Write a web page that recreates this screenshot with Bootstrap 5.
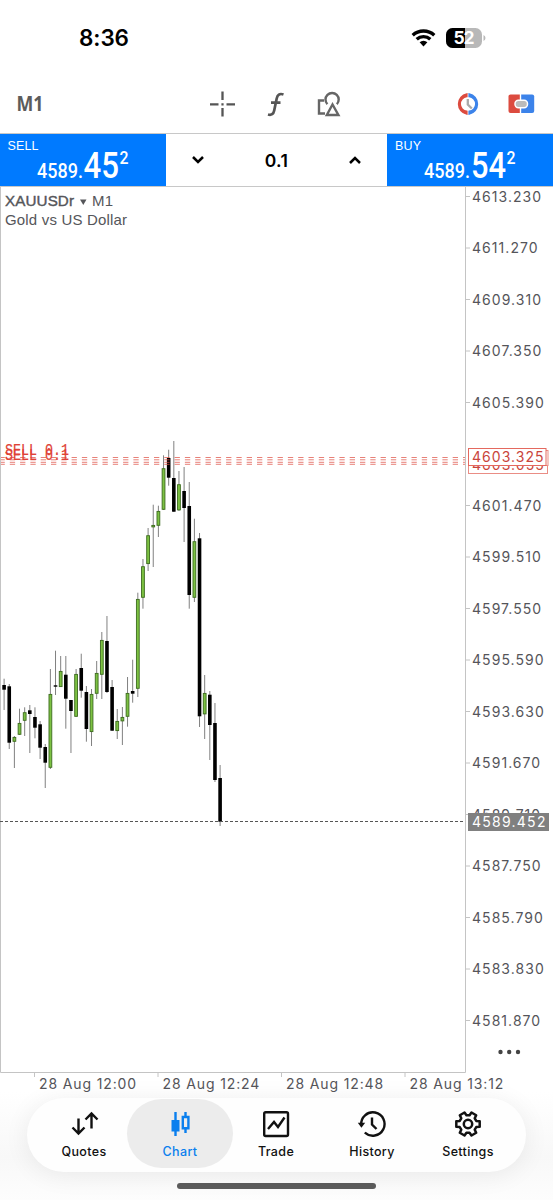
<!DOCTYPE html>
<html lang="en">
<head>
<meta charset="utf-8">
<meta name="viewport" content="width=device-width, initial-scale=1">
<title>XAUUSDr M1</title>
<link href="https://cdn.jsdelivr.net/npm/bootstrap@5.3.0/dist/css/bootstrap.min.css" rel="stylesheet">
<style>
  body { font-family: Inter, "Liberation Sans", sans-serif; background: #fff; color: #000; }
  svg { display: block; flex: none; overflow: visible; }
  .screen { width: 553px; height: 1200px; overflow: hidden; }
  .statusbar { height: 75px; padding: 0 67px 0 79px; }
  .clock { font-size: 22.5px; font-weight: 600; letter-spacing: -.1px; }
  .toolbar { height: 58px; padding: 0 18px 0 16px; }
  .tradebar { height: 54px; border-top: 1px solid #c8c8c8; border-bottom: 1px solid #c8c8c8; }
  .quote { width: 166px; background: #007aff; }
  .lot { font-size: 17.5px; font-weight: 600; letter-spacing: .4px; padding-top: 2px; }
  .chart-area { height: 905px; }
  .bottom { height: 108px; background: linear-gradient(#fff, #f8f8f8 60%, #fdfdfd); }
  .tabs { width: 499px; height: 74px; margin: 6px 0 0 27px; padding: 1px 9px; border-radius: 37px; background: #fefefe; box-shadow: 0 3px 26px rgba(0,0,0,.07); }
  .tab { width: 96px; height: 69px; font-size: 12.5px; font-weight: 500; letter-spacing: .35px; line-height: 16px; color: #111; }
  .tab svg { margin: 11px 0 6px; }
  .tab-on { width: 106px; margin: 0 -5px; border-radius: 35px; background: #ececec; color: #0a7fee; }
  .homebar { width: 199px; height: 6px; margin: 11px 0 0 177px; border-radius: 3px; background: #5c5c5c; }
  .axis { font: 14px Inter, sans-serif; fill: #55555a; }
</style>
</head>
<body>
<div class="screen d-flex flex-column">
  <header class="statusbar d-flex align-items-center justify-content-between">
    <div class="clock">8:36</div>
    <div class="d-flex align-items-center">
      <svg width="26" height="20" viewBox="0 0 26 20" fill="none" stroke="#000" stroke-width="3.4">
        <path d="M1.7 7.2a16 16 0 0 1 21.6 0M5.7 11.3a10 10 0 0 1 13.6 0"/>
        <path d="M8.6 14.3a5.8 5.8 0 0 1 7.8 0L12.5 18.4z" fill="#000" stroke="none"/>
      </svg>
      <svg class="ms-2" width="41" height="20" viewBox="0 0 41 20">
        <rect x="1" y="0" width="36" height="20" rx="6.5" fill="#b8b8b8"/>
        <path d="M20 0H7.500A6.500 6.500 0 0 0 1 6.500v7A6.500 6.500 0 0 0 7.500 20H20z"/>
        <path d="M38.500 7v6q2-1 2-3t-2-3" fill="#b8b8b8"/>
        <text x="8.500" y="16.300" font-family="Inter" font-size="17.500" font-weight="700" fill="#fff" textLength="21">52</text>
      </svg>
    </div>
  </header>

  <div class="toolbar d-flex align-items-center">
    <svg width="30" height="30" viewBox="0 0 30 30"><text x="0.500" y="22" font-family="Open Sans" font-size="20.500" font-weight="700" fill="#5c5c5c" textLength="27" lengthAdjust="spacingAndGlyphs">M1</text></svg>
    <svg width="28" height="28" viewBox="0 0 28 28" stroke="#555" stroke-width="2.300" style="margin-left:162px"><path d="M14.500 1.500v8.500M14.500 18v8.500M2 14.300h8.500M18.500 14.300H27M13.400 14.300h2.200"/></svg>
    <svg width="20" height="28" viewBox="0 0 20 28" fill="none" stroke="#555" stroke-width="2.700" style="margin-left:30px"><path d="M17.500 4.500c-4-1.400-6 .3-6.800 4L8.200 20.500c-.7 3.600-2.700 5-6.200 4M5 12.700h9.500"/></svg>
    <svg width="26" height="28" viewBox="0 0 26 28" fill="none" stroke="#666" stroke-width="2.400" style="margin-left:30px"><path d="M8 10.500H3V23.500H9M11.400 14.200a6.600 6.600 0 1 1 9.400 0M16.500 14.500L10.800 25h11.600z"/></svg>
    <svg class="ms-auto" width="28" height="28" viewBox="0 0 28 28">
      <path d="M12.800 4a10.200 10.200 0 0 0 0 20v-2.600a7.500 7.500 0 0 1 0-14.900z" fill="#dc4b3f" stroke="#dc4b3f" stroke-width="1.600"/>
      <path d="M15.200 4a10.200 10.200 0 0 1 0 20v-2.600a7.500 7.500 0 0 0 0-14.900z" fill="#3c83ea" stroke="#3c83ea" stroke-width="1.600"/>
      <path d="M13.800 9v5.500l4 4" fill="none" stroke="#aaa" stroke-width="2.300"/>
    </svg>
    <svg width="28" height="28" viewBox="0 0 28 28" style="margin-left:25px">
      <path d="M12.800 4.500H3.500a2 2 0 0 0-2 2v14.500a2 2 0 0 0 2 2h9.300z" fill="#dc4b3f"/>
      <path d="M14.200 4.500h11a2 2 0 0 1 2 2v14.500a2 2 0 0 1-2 2h-11z" fill="#3c83ea"/>
      <rect x="8" y="10.300" width="12.500" height="7.400" rx="3.400" fill="#bbb" stroke="#fff" stroke-width="1.500"/>
    </svg>
  </div>

  <section class="tradebar d-flex">
    <div class="quote">
      <svg width="166" height="52" viewBox="0 134 166 52" fill="#fff" font-family="Roboto">
        <text x="7.500" y="150" font-family="Liberation Sans" font-size="12.500" textLength="31">SELL</text>
        <text x="37" y="177.500" font-size="21" font-weight="500" textLength="46" lengthAdjust="spacingAndGlyphs">4589.</text>
        <text x="83.500" y="177.500" font-size="36" font-weight="500" textLength="35.500" lengthAdjust="spacingAndGlyphs">45</text>
        <text x="119.500" y="164" font-size="19" font-weight="500" textLength="9" lengthAdjust="spacingAndGlyphs">2</text>
      </svg>
    </div>
    <div class="flex-fill d-flex align-items-center justify-content-between">
      <svg width="14" height="10" viewBox="0 0 14 10" fill="none" stroke="#000" stroke-width="2.500" style="margin-left:25px"><path d="M2 2l5 5 5-5"/></svg>
      <span class="lot">0.1</span>
      <svg width="14" height="10" viewBox="0 0 14 10" fill="none" stroke="#000" stroke-width="2.500" style="margin-right:25px"><path d="M2 8l5-5 5 5"/></svg>
    </div>
    <div class="quote">
      <svg width="166" height="52" viewBox="387 134 166 52" fill="#fff" font-family="Roboto">
        <text x="395" y="150" font-family="Liberation Sans" font-size="12.500" textLength="26">BUY</text>
        <text x="424" y="177.500" font-size="21" font-weight="500" textLength="46" lengthAdjust="spacingAndGlyphs">4589.</text>
        <text x="471" y="177.500" font-size="36" font-weight="500" textLength="35" lengthAdjust="spacingAndGlyphs">54</text>
        <text x="506.500" y="164" font-size="19" font-weight="500" textLength="9" lengthAdjust="spacingAndGlyphs">2</text>
      </svg>
    </div>
  </section>

  <main class="chart-area">
    <svg id="chart" width="553" height="908" viewBox="0 187 553 908">
      <path d="M.5 187V1072.500H465.500V187" fill="none" stroke="#c4c4c4"/>
      <g font-family="Liberation Sans" font-size="15" fill="#55565a">
        <text x="5" y="206" font-size="15.200" stroke="#55565a" stroke-width=".4" textLength="69">XAUUSDr</text>
        <path d="M80 199.500h6.500l-3.200 5.500z"/>
        <text x="92" y="206" textLength="21">M1</text>
        <text x="5" y="225" textLength="122">Gold vs US Dollar</text>
      </g>
      <g id="scale" class="axis"></g>
      <g id="candles" shape-rendering="auto"></g>
      <g stroke="#e0574c" stroke-width="1" stroke-dasharray="5.300 5" opacity=".75">
        <path d="M1 457.500H465M1 459.800H465M1 462.300H465M1 464.300H465" stroke-dashoffset="1.500"/>
      </g>
      <g font-family="Liberation Mono" font-size="17" fill="#df4236" stroke="#df4236" stroke-width=".2">
        <text x="5" y="455" textLength="64" lengthAdjust="spacingAndGlyphs">SELL 0.1</text>
        <text x="5" y="460" textLength="64" lengthAdjust="spacingAndGlyphs">SELL 0.1</text>
      </g>
      <path d="M0 821.500H465" stroke="#555" stroke-dasharray="3 2"/>
      <g class="axis">
        <rect x="468.500" y="454.500" width="79" height="19" fill="#fff" stroke="#ea8d85"/>
        <text x="472" y="469.500" letter-spacing="1.050" fill="#c9453b">4603.055</text>
        <rect x="468.500" y="450.500" width="79.500" height="15" fill="#fff" stroke="#ea8d85"/>
        <rect x="468.500" y="448.500" width="77.500" height="17" fill="#fff" stroke="#e4695f"/>
        <text x="472" y="462" letter-spacing="1.050" fill="#c9453b">4603.325</text>
        <rect x="468" y="813" width="81" height="18" fill="#808080"/>
        <text x="472" y="827" letter-spacing="1.250" fill="#fff">4589.452</text>
      </g>
      <g fill="#444"><circle cx="500.500" cy="1052" r="2.200"/><circle cx="509.200" cy="1052" r="2.200"/><circle cx="518" cy="1052" r="2.200"/></g>
    </svg>
  </main>

  <footer class="bottom">
    <nav class="tabs d-flex position-relative">
      <div class="tab d-flex flex-column align-items-center">
        <svg width="28" height="28" viewBox="0 0 28 28" fill="none" stroke="#111" stroke-width="2.400"><path d="M8.500 8.500v15M2.500 17.500l6 6 6-6M21.500 18.500V3.500M15.500 9.500l6-6 6 6"/></svg>
        Quotes
      </div>
      <div class="tab tab-on d-flex flex-column align-items-center">
        <svg width="28" height="28" viewBox="0 0 28 28" fill="none" stroke="#0a7fee" stroke-width="2.400"><path d="M9.500 2v24M19.500 2v4.500M19.500 18v5"/><path d="M5.500 10h8v11.500h-8z" fill="#0a7fee" stroke="none"/><path d="M16.800 7h5.600v11.300h-5.600z"/></svg>
        Chart
      </div>
      <div class="tab d-flex flex-column align-items-center">
        <svg width="28" height="28" viewBox="0 0 28 28" fill="none" stroke="#111" stroke-width="2.400"><rect x="2.200" y="2.200" width="23.800" height="23.800" rx="1.500"/><path d="M6 19l6-7 4 5 6.500-9.500"/></svg>
        Trade
      </div>
      <div class="tab d-flex flex-column align-items-center">
        <svg width="28" height="28" viewBox="0 0 28 28" fill="none" stroke="#111" stroke-width="2.400"><path d="M3.200 15a11.700 11.700 0 1 1 3.600 7.500M14 7.500V14.500l4.500 4.500" /><path d="M-.2 12.800h7.400L3.400 17.800z" fill="#111" stroke="none"/></svg>
        History
      </div>
      <div class="tab d-flex flex-column align-items-center">
        <svg width="28" height="28" viewBox="0 0 28 28" fill="none" stroke="#111" stroke-width="2.500" stroke-linejoin="round"><path id="gear"/><circle cx="14" cy="14" r="4.200"/></svg>
        Settings
      </div>
    </nav>
    <div class="homebar"></div>
  </footer>
</div>
<script src="https://cdn.jsdelivr.net/npm/bootstrap@5.3.0/dist/js/bootstrap.bundle.min.js"></script>
<script>
  // Each bar: direction (1 up, 0 down), body top, body bottom, high, low
  const bars = [
    [0,685,689.7,678.7,710],[0,686.3,742.7,684,749],[1,737,741.7,736,768],[1,723,734.7,708.7,735],
    [1,712.3,720.7,707.3,736],[0,710.3,714,705,753],[0,717,727.7,707.3,738.3],[0,724.3,747.7,721,759],
    [0,747,762.7,744,788],[1,694,767.7,669,769],[0,685.3,686.7,650.7,695],[1,671,687,656,687],
    [0,674.7,698.7,656,728.7],[0,700,711,700,753],[1,674,716.7,669,717],[0,668,690.7,653.7,697.7],
    [0,692,729,686,741.7],[1,694,732,689,746],[1,673,693.7,661,699],[1,640,674.7,632,699],
    [0,641,692,616,693],[0,687,730.7,680,731],[1,721,731,709,739],[1,717,721.3,707,745],
    [1,693,716.7,677,726.7],[0,691,693.7,659.7,702.7],[1,599,688.7,592.7,697],[1,566.3,597.7,559,608.7],
    [1,535.3,564,528,571],[1,525,527.3,504.7,567],[1,511,525.7,505.7,537],[1,468.3,509.7,455.3,510],
    [0,458,477.7,449.7,485.7],[0,478,511.7,441,512],[1,484.3,510.3,471,511],[0,491,508,467,542],
    [0,506,595,482,608.7],[1,541.3,597.7,518.7,602],[0,538.3,716.3,533,727],[1,693,714.3,675,739],
    [0,694.7,725,691,760],[0,723,780,703,782],[0,778,821.7,765,826]
  ];
  document.getElementById('candles').innerHTML = bars.map(([up, t, b, h, l], i) => {
    const x = 4.1 + i * 5.143;
    const wick = `<path d="M${x} ${h}V${l}" stroke="#808080" stroke-width="1"/>`;
    return wick + (up
      ? `<rect x="${x - 1.4}" y="${t + .4}" width="2.800" height="${Math.max(b - t - .8, 1)}" fill="#7cc142" stroke="#3c6b1e" stroke-width=".9"/>`
      : `<rect x="${x - 1.8}" y="${t}" width="3.600" height="${b - t}" fill="#000"/>`);
  }).join('');

  let scale = '';
  for (let i = 0; i < 17; i++) {
    if (i === 5) continue;
    const y = 196.5 + i * 51.5;
    scale += `<path d="M466 ${y}h4" stroke="#c4c4c4"/><text x="472" y="${y + 5}" letter-spacing="1.050">${(4613.23 - i * 1.96).toFixed(3)}</text>`;
  }
  ['12:00', '12:24', '12:48', '13:12'].forEach((t, i) => {
    const x = 34.5 + i * 123.5;
    scale += `<path d="M${x} 1073v4" stroke="#c4c4c4"/><text x="${x + 4.5}" y="1088.500" letter-spacing=".87">28 Aug ${t}</text>`;
  });
  document.getElementById('scale').innerHTML = scale;

  // Gear outline with six teeth
  const pts = [];
  for (let k = 0; k < 6; k++) {
    [[-20, 8.8], [-13, 12], [13, 12], [20, 8.8]].forEach(([d, r]) => {
      const a = (k * 60 + d) * Math.PI / 180;
      pts.push((14 + r * Math.cos(a)).toFixed(2) + ' ' + (14 + r * Math.sin(a)).toFixed(2));
    });
  }
  document.getElementById('gear').setAttribute('d', 'M' + pts.join('L') + 'z');
</script>
</body>
</html>
